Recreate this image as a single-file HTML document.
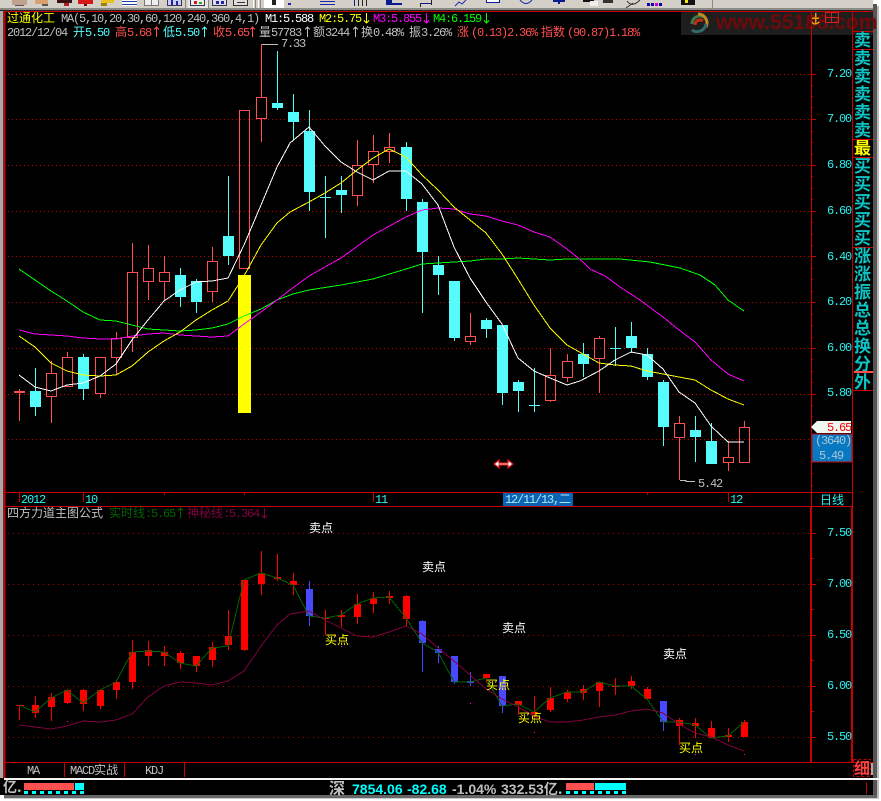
<!DOCTYPE html>
<html><head><meta charset="utf-8">
<style>
html,body{margin:0;padding:0;background:#fff;width:881px;height:801px;overflow:hidden}
svg{position:absolute;left:0;top:0;display:block}
text{white-space:pre}
.m{font-family:"Liberation Mono","WenQuanYi Zen Hei",monospace;font-size:12px;letter-spacing:-1.2px}
.z{font-family:"WenQuanYi Zen Hei","Noto Sans CJK SC",sans-serif;font-size:12px;letter-spacing:0}
.c{font-family:"WenQuanYi Zen Hei","Noto Sans CJK SC",sans-serif;font-size:17px;fill:#0cc4c4;font-weight:bold}
.s{font-family:"Liberation Sans",sans-serif;font-size:14px;font-weight:bold}
</style></head><body>
<svg width="881" height="801" viewBox="0 0 881 801" xmlns="http://www.w3.org/2000/svg">
<!-- window -->
<rect x="0" y="0" width="873" height="795" fill="#000"/>
<rect x="873" y="4" width="4" height="794" fill="#555"/>
<rect x="877" y="6" width="2" height="792" fill="#bbb"/>
<rect x="4" y="795" width="873" height="3" fill="#666"/>
<rect x="4" y="798" width="875" height="1" fill="#ccc"/>
<rect x="0" y="0" width="3" height="778" fill="#a8a8a8"/>
<rect x="3" y="0" width="1" height="778" fill="#444"/>
<!-- toolbar -->
<rect x="0" y="0" width="873" height="8" fill="#d4d0c8"/>
<rect x="0" y="8" width="873" height="2" fill="#8a8a86"/>
<rect x="0" y="10" width="873" height="1" fill="#222"/>
<g shape-rendering="crispEdges">
<rect x="12" y="0" width="15" height="5" fill="#bfa38e"/><rect x="15" y="5" width="9" height="1" fill="#555"/>
<rect x="35" y="0" width="13" height="4" fill="#d9a070"/><rect x="42" y="4" width="6" height="2" fill="#555"/>
<rect x="57" y="0" width="15" height="3" fill="#3a1010"/><rect x="64" y="3" width="5" height="3" fill="#b02020"/>
<rect x="78" y="0" width="15" height="4" fill="#d81818"/><rect x="84" y="4" width="3" height="2" fill="#800"/>
<rect x="101" y="0" width="13" height="3" fill="#e8c020"/><rect x="101" y="3" width="6" height="3" fill="#a08010"/>
<rect x="122" y="0" width="15" height="6" fill="#fff"/><rect x="122" y="1" width="15" height="1" fill="#2040a0"/><rect x="122" y="4" width="15" height="1" fill="#2040a0"/>
<rect x="144" y="0" width="15" height="6" fill="#777"/><rect x="145" y="0" width="6" height="5" fill="#eee"/><rect x="152" y="0" width="6" height="5" fill="#eee"/>
<rect x="167" y="0" width="15" height="6" fill="#335"/><rect x="168" y="0" width="13" height="5" fill="#cce"/><rect x="171" y="0" width="2" height="5" fill="#22a"/><rect x="176" y="1" width="2" height="4" fill="#22a"/>
<rect x="185" y="0" width="1" height="8" fill="#888"/>
<rect x="188" y="0" width="20" height="8" fill="#e8e6e0"/>
<rect x="190" y="0" width="15" height="6" fill="#335"/><rect x="191" y="0" width="13" height="5" fill="#eee"/><rect x="194" y="1" width="3" height="3" fill="#d01818"/><rect x="199" y="2" width="3" height="2" fill="#2a2"/>
<rect x="208" y="0" width="1" height="8" fill="#888"/>
<rect x="212" y="0" width="15" height="6" fill="#335"/><rect x="213" y="0" width="13" height="5" fill="#dde"/><rect x="216" y="1" width="3" height="3" fill="#22a"/><rect x="221" y="1" width="3" height="3" fill="#22a"/>
<rect x="233" y="0" width="15" height="6" fill="#333"/><rect x="234" y="0" width="13" height="5" fill="#ddd"/><rect x="237" y="2" width="8" height="1" fill="#333"/>
<rect x="253" y="0" width="1" height="8" fill="#fff"/><rect x="255" y="0" width="1" height="8" fill="#888"/><rect x="258" y="0" width="1" height="8" fill="#fff"/><rect x="260" y="0" width="1" height="8" fill="#888"/>
<rect x="264" y="0" width="20" height="8" fill="#fff"/><rect x="272" y="0" width="4" height="5" fill="#222"/>
<rect x="288" y="3" width="3" height="2" fill="#22a"/>
<rect x="320" y="1" width="15" height="1" fill="#1a2ab0"/><rect x="320" y="4" width="15" height="1" fill="#1a2ab0"/>
<rect x="354" y="0" width="1" height="6" fill="#0a1a90"/><rect x="358" y="0" width="1" height="6" fill="#222"/><rect x="362" y="0" width="1" height="6" fill="#222"/><rect x="366" y="0" width="1" height="6" fill="#222"/>
<rect x="386" y="0" width="6" height="5" fill="#0a1a90"/><rect x="392" y="3" width="10" height="2" fill="#0a1a90"/>
<rect x="420" y="3" width="12" height="1" fill="#0a1a90"/><rect x="420" y="3" width="1" height="4" fill="#222"/><rect x="431" y="0" width="1" height="5" fill="#222"/>
<rect x="486" y="0" width="14" height="3" fill="#fff"/><rect x="486" y="2" width="14" height="1" fill="#0a1a90"/><rect x="486" y="0" width="1" height="3" fill="#0a1a90"/><rect x="499" y="0" width="1" height="3" fill="#0a1a90"/>
<rect x="553" y="0" width="12" height="2" fill="#0a1a90"/><rect x="558" y="2" width="2" height="2" fill="#0a1a90"/>
<rect x="583" y="0" width="11" height="2" fill="#111"/><rect x="590" y="1" width="8" height="5" fill="#eee"/>
<rect x="603" y="0" width="10" height="3" fill="#333"/>
<rect x="647" y="3" width="3" height="3" fill="#10a"/><rect x="651" y="3" width="3" height="3" fill="#10a"/><rect x="655" y="3" width="3" height="3" fill="#c0c"/><rect x="659" y="3" width="3" height="3" fill="#10a"/>
<rect x="681" y="0" width="14" height="5" fill="#111"/><rect x="685" y="0" width="3" height="3" fill="#ee0"/>
<rect x="712" y="0" width="1" height="9" fill="#888"/>
</g>
<g fill="none" stroke="#1a2ab0"><path d="M455 6L459 2L462 4L466 0"/><path d="M633 3L626 8M640 0Q632 8 627 1" stroke="#333"/><path d="M520 0Q526 7 532 0"/></g>

<!-- watermark -->
<rect x="681" y="12" width="192" height="23" fill="#1e1e1e"/>
<g fill="none" stroke-width="3"><path d="M692 24A8 8 0 0 1 704 17" stroke="#3f7a4a"/><path d="M698 14A9 9 0 0 1 706 27" stroke="#c08a20"/><path d="M706 24A9 9 0 0 1 692 30" stroke="#2f6a6a"/><path d="M695 25A5 5 0 0 1 703 21" stroke="#c03010"/></g>
<text x="716" y="29" font-family="Liberation Sans,sans-serif" font-weight="bold" font-size="21" fill="#6e0a0a">www.55188.com</text>
<g shape-rendering="crispEdges">
<path d="M825.5 12.5H838.5V22.5H825.5ZM825.5 17.5H838.5M831.5 12.5V22.5" fill="none" stroke="#d02020"/>
<path d="M815.5 13V24M812 18H819M811.5 22Q815 26 819 22" fill="none" stroke="#e0a010" stroke-width="1.5"/>
</g>

<!-- grid -->
<g stroke="#c80000" fill="none" stroke-dasharray="1 3" shape-rendering="crispEdges">
<path d="M8 74.5H810M8 119.5H810M8 165.5H810M8 211.5H810M8 256.5H810M8 302.5H810M8 348.5H810M8 394.5H810M8 439.5H810"/>
</g>
<g stroke="#b00000" fill="none" stroke-dasharray="1 4" shape-rendering="crispEdges">
<path d="M8 533.5H810M8 584.5H810M8 635.5H810M8 686.5H810M8 737.5H810"/>
</g>

<!-- frame -->
<g stroke="#c80000" fill="none" shape-rendering="crispEdges">
<path d="M4.5 11V778" stroke-width="2"/>
<path d="M4 11.5H873M4 492.5H853M4 506.5H853M4 762.5H873"/>
<path d="M811.5 11V506M852.5 11V506"/>
<path d="M811 506V762M852 506V762" stroke-width="2"/>
<path d="M852 31.5H873M852 49.5H873M852 139.5H873M852 157.5H873M852 247.5H873M852 390.5H873"/>
<path d="M64.5 762V777M124.5 762V777M184.5 762V777"/>
<path d="M19.5 492V502M83.5 492V502M164.5 492V495M244.5 492V495M373.5 492V502M647.5 492V495M728.5 492V502"/>
<path d="M811 74.5H816M811 119.5H816M811 165.5H816M811 211.5H816M811 256.5H816M811 302.5H816M811 348.5H816M811 394.5H816M811 439.5H816"/>
<path d="M811 85.5H813M811 96.5H813M811 107.5H813M811 131.5H813M811 142.5H813M811 154.5H813M811 176.5H813M811 188.5H813M811 199.5H813M811 222.5H813M811 234.5H813M811 245.5H813M811 268.5H813M811 279.5H813M811 291.5H813M811 314.5H813M811 325.5H813M811 337.5H813M811 359.5H813M811 371.5H813M811 382.5H813M811 405.5H813M811 416.5H813M811 428.5H813M811 450.5H813M811 462.5H813M811 473.5H813M811 485.5H813"/>
<path d="M812 533.5H816M812 584.5H816M812 635.5H816M812 686.5H816M812 737.5H816M812 558.5H814M812 609.5H814M812 660.5H814M812 711.5H814"/>
</g>

<!-- upper yellow bar -->
<rect x="238" y="275" width="13" height="138" fill="#ffff00" shape-rendering="crispEdges"/>

<!-- upper candles -->
<g shape-rendering="crispEdges">
<path fill="none" stroke="#ff5050" d="M19.5 389V421
M51.5 361V373M51.5 397V423M46.5 373.5h10v23h-10z
M67.5 352V357M62.5 357.5h10v29h-10z
M100.5 393V398M95.5 357.5h10v36h-10z
M116.5 332V338M116.5 358V375M111.5 338.5h10v19h-10z
M132.5 243V272M132.5 338V352M127.5 272.5h10v65h-10z
M148.5 245V268M148.5 282V300M143.5 268.5h10v13h-10z
M164.5 256V272M164.5 282V300M159.5 272.5h10v9h-10z
M212.5 247V261M212.5 292V302M207.5 261.5h10v30h-10z
M239.5 110.5h10v158h-10z
M261.5 44V97M261.5 119V142M256.5 97.5h10v21h-10z
M357.5 140V165M357.5 196V206M352.5 165.5h10v30h-10z
M373.5 135V151M373.5 165V183M368.5 151.5h10v13h-10z
M389.5 133V147M389.5 152V163M384.5 147.5h10v4h-10z
M470.5 313V336M470.5 342V345M465.5 336.5h10v5h-10z
M550.5 348V375M550.5 401V402M545.5 375.5h10v25h-10z
M567.5 354V361M567.5 378V382M562.5 361.5h10v16h-10z
M599.5 336V338M599.5 359V393M594.5 338.5h10v20h-10z
M679.5 416V423M679.5 438V480M674.5 423.5h10v14h-10z
M728.5 441V457M728.5 463V471M723.5 457.5h10v5h-10z
M744.5 421V427M739.5 427.5h10v35h-10z"/>
<rect x="14" y="391" width="11" height="2" fill="#ff5050"/>
<path fill="none" stroke="#54fcfc" d="M35.5 368V416M83.5 354V400M180.5 268V307M196.5 279V313M228.5 176V265M277.5 51V110M293.5 94V140M309.5 110V211M325.5 176V238M341.5 176V213M406.5 142V211M422.5 199V313M438.5 256V295M454.5 338V341M486.5 318V338M502.5 393V405M518.5 380V412M534.5 368V412M583.5 343V377M615.5 327V366M631.5 322V353M647.5 348V380M663.5 380V446M695.5 416V462M711.5 423V441M320 197.5H331M529 405.5H540M610 348.5H621"/>
<path fill="#54fcfc" d="M30 391h11v16h-11zM78 357h11v32h-11zM175 275h11v22h-11zM191 281h11v21h-11zM223 236h11v20h-11zM272 103h11v5h-11zM288 112h11v10h-11zM304 131h11v61h-11zM336 190h11v5h-11zM401 147h11v52h-11zM417 202h11v50h-11zM433 265h11v10h-11zM449 281h11v57h-11zM481 320h11v9h-11zM497 325h11v68h-11zM513 382h11v9h-11zM578 354h11v10h-11zM626 336h11v12h-11zM642 354h11v23h-11zM658 382h11v45h-11zM690 430h11v7h-11zM706 441h11v23h-11z"/>
</g>

<!-- upper MA lines -->
<g fill="none" stroke-width="1" shape-rendering="crispEdges">
<polyline stroke="#00ff00" points="19,269 35,280 51,291 67,301 83,312 100,320 116,321 132,325 148,329 164,330 180,331 196,330 212,328 228,324 244,316 261,309 277,300 293,294 309,290 341,285 373,279 406,269 422,264 438,263 454,262 470,261 486,259 502,259 518,258 550,260 567,259 590,259 620,259 650,262 680,268 700,275 715,285 728,300 744,311"/>
<polyline stroke="#ff00ff" points="19,330 35,334 51,335 67,336 83,338 100,339 116,339 132,336 148,334 164,333 180,335 196,336 212,337 228,336 244,324 261,312 277,300 290,290 309,276 341,258 373,235 406,217 422,210 438,208 454,209 470,214 486,216 502,221 518,225 534,232 550,237 567,249 583,262 590,269 605,276 620,287 640,300 663,317 679,330 695,342 711,360 728,374 744,381"/>
<polyline stroke="#ffff00" points="19,336 35,347 51,363 67,371 83,375 100,376 116,375 132,366 148,352 164,341 180,332 196,320 212,310 228,301 244,276 261,245 277,223 290,212 309,202 325,193 341,183 357,170 373,158 389,149 406,157 422,175 438,190 454,207 470,220 486,233 502,254 518,279 534,305 550,328 567,345 583,354 599,363 615,365 631,366 647,371 663,374 679,377 695,380 711,390 728,399 744,405"/>
<polyline stroke="#ffffff" points="19,375 35,387 51,391 67,385 83,383 100,376 116,364 132,340 148,320 164,301 180,290 196,282 212,281 228,278 244,245 261,205 277,167 290,143 309,127 325,146 341,162 357,172 373,180 389,171 406,171 422,184 438,205 454,247 470,278 486,302 502,324 518,358 534,371 550,378 567,385 580,381 599,371 615,360 631,352 647,355 663,369 679,392 695,403 711,426 728,442 744,442"/>
</g>

<!-- markers -->
<g fill="none" stroke="#c0c0c0" shape-rendering="crispEdges"><path d="M262 44.5H278"/><path d="M680 480.5H686V481.5H695"/></g>
<text class="m" x="281" y="47" fill="#c0c0c0">7.33</text>
<text class="m" x="698" y="487" fill="#c0c0c0">5.42</text>

<path d="M494 464L499 460V463H508V460L513 464L508 468V465H499V468Z" fill="#fff" stroke="#e01010" stroke-width="1.2"/>

<!-- header texts -->
<text class="z" x="7" y="22" fill="#ffff00">过通化工</text>
<text class="m" x="61" y="22" fill="#c0c0c0">MA(5,10,20,30,60,120,240,360,4,1)</text>
<text class="m" x="265" y="22" fill="#ffffff">M1:5.588</text>
<text class="m" x="319" y="22" fill="#ffff00">M2:5.75</text>
<text class="m" x="373" y="22" fill="#ff00ff">M3:5.855</text>
<text class="m" x="433" y="22" fill="#00ff00">M4:6.159</text>
<g fill="none" shape-rendering="crispEdges">
<path stroke="#ffff00" d="M366.5 13V23M364 20.5L366.5 23L369 20.5"/>
<path stroke="#ff00ff" d="M426.5 13V23M424 20.5L426.5 23L429 20.5"/>
<path stroke="#00ff00" d="M486.5 13V23M484 20.5L486.5 23L489 20.5"/>
<path stroke="#ff5050" d="M156.5 37V27M154 29.5L156.5 27L159 29.5M252.5 37V27M250 29.5L252.5 27L255 29.5"/>
<path stroke="#54fcfc" d="M204.5 37V27M202 29.5L204.5 27L207 29.5"/>
<path stroke="#c0c0c0" d="M307.5 37V27M305 29.5L307.5 27L310 29.5M355.5 37V27M353 29.5L355.5 27L358 29.5"/>
<path stroke="#006400" d="M180.5 518V508M178 510.5L180.5 508L183 510.5"/>
<path stroke="#800040" d="M264.5 508V518M262 515.5L264.5 518L267 515.5"/>
</g>

<text class="m" x="7" y="36" fill="#c0c0c0">2012/12/04</text>
<text class="z" x="73" y="36" fill="#54fcfc">开</text><text class="m" x="85" y="36" fill="#54fcfc">5.50</text>
<text class="z" x="115" y="36" fill="#ff5050">高</text><text class="m" x="127" y="36" fill="#ff5050">5.68</text>
<text class="z" x="163" y="36" fill="#54fcfc">低</text><text class="m" x="175" y="36" fill="#54fcfc">5.50</text>
<text class="z" x="213" y="36" fill="#ff5050">收</text><text class="m" x="225" y="36" fill="#ff5050">5.65</text>
<text class="z" x="259" y="36" fill="#c0c0c0">量</text><text class="m" x="271" y="36" fill="#c0c0c0">57783</text>
<text class="z" x="313" y="36" fill="#c0c0c0">额</text><text class="m" x="325" y="36" fill="#c0c0c0">3244</text>
<text class="z" x="361" y="36" fill="#c0c0c0">换</text><text class="m" x="373" y="36" fill="#c0c0c0">0.48%</text>
<text class="z" x="409" y="36" fill="#c0c0c0">振</text><text class="m" x="421" y="36" fill="#c0c0c0">3.26%</text>
<text class="z" x="457" y="36" fill="#ff5050">涨</text><text class="m" x="471" y="36" fill="#ff5050">(0.13)2.36%</text>
<text class="z" x="541" y="36" fill="#ff5050">指数</text><text class="m" x="567" y="36" fill="#ff5050">(90.87)1.18%</text>

<!-- axis labels -->
<g fill="#2cf0f0">
<text class="m" x="827" y="77">7.20</text><text class="m" x="827" y="122">7.00</text><text class="m" x="827" y="168">6.80</text><text class="m" x="827" y="214">6.60</text><text class="m" x="827" y="260">6.40</text><text class="m" x="827" y="305">6.20</text><text class="m" x="827" y="351">6.00</text><text class="m" x="827" y="396">5.80</text>
<text class="m" x="827" y="536">7.50</text><text class="m" x="827" y="587">7.00</text><text class="m" x="827" y="638">6.50</text><text class="m" x="827" y="689">6.00</text><text class="m" x="827" y="740">5.50</text>
<text class="m" x="21" y="503">2012</text><text class="m" x="85" y="503">10</text><text class="m" x="375" y="503">11</text><text class="m" x="730" y="503">12</text>
</g>
<rect x="503" y="493" width="70" height="13" fill="#0a64b4"/>
<text class="m" x="505" y="503" fill="#b0e8f8">12/11/13,<tspan class="z">二</tspan></text>
<text class="z" x="820" y="504" fill="#2cf0f0">日线</text>

<!-- price tag -->
<path d="M811 427L817 421H851V433H817Z" fill="#f0f8f0"/>
<text class="m" x="827" y="431" fill="#ff0000">5.65</text>
<rect x="812" y="434" width="40" height="28" fill="#0878c0" stroke="#c80000"/>
<text class="m" x="815" y="444" fill="#a8c8d8">(3640)</text>
<text class="m" x="819" y="459" fill="#a8c8d8">5.49</text>

<!-- right panel -->
<text class="c" x="854" y="46">卖</text><text class="c" x="854" y="64">卖</text><text class="c" x="854" y="82">卖</text><text class="c" x="854" y="100">卖</text><text class="c" x="854" y="118">卖</text><text class="c" x="854" y="136">卖</text>
<text class="c" x="854" y="154" style="fill:#ffff00">最</text>
<text class="c" x="854" y="172">买</text><text class="c" x="854" y="190">买</text><text class="c" x="854" y="208">买</text><text class="c" x="854" y="226">买</text><text class="c" x="854" y="244">买</text>
<text class="c" x="854" y="262">涨</text><text class="c" x="854" y="280">涨</text><text class="c" x="854" y="298">振</text><text class="c" x="854" y="316">总</text><text class="c" x="854" y="334">总</text><text class="c" x="854" y="352">换</text><text class="c" x="854" y="370">分</text><text class="c" x="854" y="388">外</text>
<rect x="854" y="371" width="19" height="2" fill="#ff5050"/>

<!-- lower title -->
<text class="z" x="7" y="517" fill="#c0c0c0">四方力道主图公式</text>
<text class="z" x="109" y="517" fill="#006400">实时线</text><text class="m" x="145" y="517" fill="#006400">:5.65</text>
<text class="z" x="187" y="517" fill="#800040">神秘线</text><text class="m" x="223" y="517" fill="#800040">:5.364</text>

<!-- lower candles -->
<g shape-rendering="crispEdges">
<path fill="none" stroke="#ff0000" d="M19.5 705V720M35.5 696V718M51.5 693V721M67.5 689V704M83.5 689V711M100.5 689V709M116.5 680V699M132.5 640V689M148.5 641V666M164.5 646V666M180.5 651V669M196.5 656V672M212.5 642V667M228.5 610V650M244.5 580V651M261.5 551V595M277.5 554V581M293.5 573V595M325.5 610V635M341.5 610V627M357.5 594V624M373.5 592V613M389.5 591V604M406.5 595V626M486.5 674V683M518.5 701V715M534.5 696V720M550.5 687V712M567.5 690V702M583.5 685V700M599.5 682V707M615.5 678V695M631.5 676V689M647.5 687V700M679.5 718V745M695.5 718V738M711.5 721V738M728.5 728V742M744.5 720V737"/>
<path fill="#ff0000" d="M16 705h8v1h-8zM32 705h7v8h-7zM48 697h7v10h-7zM64 690h7v13h-7zM80 690h7v14h-7zM97 690h7v16h-7zM113 682h7v8h-7zM129 652h7v30h-7zM145 650h7v6h-7zM161 652h7v4h-7zM177 653h7v10h-7zM193 656h7v10h-7zM209 647h7v13h-7zM225 636h7v9h-7zM241 580h7v70h-7zM258 573h7v11h-7zM274 577h7v2h-7zM290 581h7v4h-7zM322 618h7v1h-7zM338 615h7v2h-7zM354 604h7v13h-7zM370 598h7v6h-7zM386 596h7v2h-7zM403 596h7v23h-7zM483 674h7v4h-7zM515 701h7v4h-7zM531 712h7v2h-7zM547 698h7v12h-7zM564 692h7v7h-7zM580 689h7v4h-7zM596 682h7v9h-7zM612 686h7v1h-7zM628 681h7v5h-7zM644 689h7v10h-7zM676 720h7v6h-7zM692 723h7v3h-7zM708 728h7v10h-7zM725 735h7v2h-7zM741 722h7v15h-7z"/>
<path fill="none" stroke="#4848ff" d="M309.5 581V626M422.5 620V672M438.5 646V663M454.5 682V684M470.5 672V686M502.5 706V713M663.5 722V731"/>
<path fill="#4848ff" d="M306 589h7v27h-7zM419 621h7v22h-7zM435 649h7v4h-7zM451 656h7v26h-7zM467 681h7v2h-7zM499 676h7v30h-7zM660 701h7v21h-7z"/>
</g>
<g fill="#ff00ff" shape-rendering="crispEdges"><rect x="67" y="721" width="1" height="1"/><rect x="341" y="646" width="1" height="1"/><rect x="470" y="703" width="1" height="1"/><rect x="534" y="732" width="1" height="1"/><rect x="695" y="754" width="1" height="1"/><rect x="744" y="754" width="1" height="1"/></g>
<g fill="none" shape-rendering="crispEdges">
<polyline stroke="#006400" points="19,705 35,712 51,698 67,690 83,703 100,690 116,682 132,652 148,651 164,652 180,663 196,666 212,648 228,646 244,580 261,573 277,578 293,585 309,616 325,618 341,615 357,604 373,598 389,597 406,618 422,643 438,652 454,682 470,682 486,678 502,706 518,704 534,712 550,698 567,692 583,692 599,682 615,686 631,686 647,699 663,722 679,722 695,725 711,738 728,736 744,722"/>
<polyline stroke="#800040" points="19,725 35,727 51,729 67,726 83,721 100,722 116,720 132,714 148,697 164,686 180,682 196,683 212,685 228,681 244,671 261,646 277,625 290,614 309,611 325,620 341,628 357,636 373,637 389,632 406,626 422,634 438,648 454,661 470,675 486,689 502,699 518,707 534,716 550,722 567,722 583,720 599,717 615,715 631,711 647,709 663,713 679,724 695,733 711,737 728,745 744,751"/>
</g>

<!-- signals -->
<g fill="#ffffff"><text class="z" x="309" y="532">卖点</text><text class="z" x="422" y="571">卖点</text><text class="z" x="502" y="632">卖点</text><text class="z" x="663" y="658">卖点</text></g>
<g fill="#ffff00"><text class="z" x="325" y="644">买点</text><text class="z" x="486" y="689">买点</text><text class="z" x="518" y="722">买点</text><text class="z" x="679" y="752">买点</text></g>

<!-- tabs -->
<text class="m" x="27" y="774" fill="#c0c0c0">MA</text>
<text class="m" x="70" y="774" fill="#c0c0c0">MACD<tspan class="z">实战</tspan></text>
<text class="m" x="145" y="774" fill="#c0c0c0">KDJ</text>

<!-- 细 -->
<text class="z" x="854" y="774" fill="#ff4040" style="font-size:16px;font-weight:bold">细</text>
<rect x="853.5" y="759.5" width="17" height="17" fill="none" stroke="#c00000" stroke-dasharray="3 2" shape-rendering="crispEdges"/>
<rect x="871" y="763" width="2" height="12" fill="#aaa"/>

<!-- status bar -->
<rect x="4" y="778" width="875" height="2" fill="#f4f4f4"/>
<text class="z" x="3" y="792" fill="#c0c0c0" style="font-size:14px;font-weight:bold">亿.</text>
<g shape-rendering="crispEdges">
<rect x="24" y="783" width="50" height="7" fill="#ff5050"/><rect x="75" y="783" width="9" height="7" fill="#00ffff"/>
<path d="M24 791h4v3h-4zM32 791h4v3h-4zM40 791h4v3h-4zM48 791h4v3h-4zM56 791h4v3h-4zM64 791h4v3h-4zM72 791h4v3h-4zM80 791h4v3h-4z" fill="#00ffff"/>
<rect x="566" y="783" width="28" height="7" fill="#ff5050"/><rect x="595" y="783" width="31" height="7" fill="#00ffff"/>
<path d="M566 791h4v3h-4zM574 791h4v3h-4zM582 791h4v3h-4zM590 791h4v3h-4zM598 791h4v3h-4zM606 791h4v3h-4zM614 791h4v3h-4zM622 791h4v3h-4z" fill="#00ffff"/>
<rect x="866" y="782" width="1" height="12" fill="#c00000"/>
</g>
<text class="z" x="329" y="794" fill="#c0c0c0" style="font-size:16px;font-weight:bold">深</text>
<text class="s" x="352" y="794" fill="#00ffff">7854.06</text>
<text class="s" x="407" y="794" fill="#00ffff">-82.68</text>
<text class="s" x="452" y="794" fill="#c0c0c0">-1.04%</text>
<text class="s" x="501" y="794" fill="#c0c0c0">332.53<tspan class="z" style="font-size:14px">亿.</tspan></text>
</svg>
</body></html>
